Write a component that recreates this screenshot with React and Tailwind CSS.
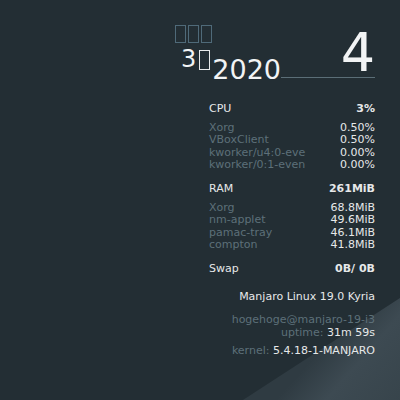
import React from "react";

const G = "text-[#5d7079]";
const W = "text-[#e6e8e9]";

function Row({ label, value, head, bold }) {
  return (
    <div className="flex justify-between">
      <span className={head ? W : G}>{label}</span>
      <span className={`${W} ${bold ? "font-bold" : ""}`}>{value}</span>
    </div>
  );
}

function Tofu({ ch, cls }) {
  return (
    <span className={`block overflow-hidden text-transparent text-[8px] leading-none border ${cls}`}>
      {ch}
    </span>
  );
}

export default function App() {
  return (
    <div className="relative w-[400px] h-[400px] overflow-hidden bg-[#232e34] font-['DejaVu_Sans',sans-serif]">
      <svg className="absolute inset-0" width="400" height="400" viewBox="0 0 400 400">
        <defs>
          <linearGradient id="g" x1="320" y1="350" x2="400" y2="420" gradientUnits="userSpaceOnUse">
            <stop offset="0" stopColor="#2f3b42" />
            <stop offset="0.35" stopColor="#3d4a52" />
            <stop offset="1" stopColor="#36434a" />
          </linearGradient>
        </defs>
        <polygon points="400,298 400,400 243,400" fill="url(#g)" />
      </svg>

      <div className="relative flex flex-col items-end pr-[25px] pt-[25px]">
        <div className="flex items-start w-[200px]">
          <div className="flex flex-col">
            <div className="flex gap-[2px]">
              <Tofu ch="水" cls="w-[11px] h-[18px] border-[#4f6a79]" />
              <Tofu ch="曜" cls="w-[11px] h-[18px] border-[#4f6a79]" />
              <Tofu ch="日" cls="w-[11px] h-[18px] border-[#4f6a79]" />
            </div>
            <div className="flex items-start mt-[3px] text-[#f2f4f5]">
              <span className="ml-[6px] mt-[1px] text-[24px] leading-none">3</span>
              <span className="ml-[3px] mt-[4px]">
                <Tofu ch="月" cls="w-[11px] h-[20px] border-[#e8eaeb]" />
              </span>
              <span className="ml-[2px] mt-[10px] text-[27px] leading-none">2020</span>
            </div>
          </div>
          <div className="flex-1 flex flex-col items-end mt-[3px]">
            <div className="h-[49px] leading-[49px] text-[54px] text-[#f2f4f5]">4</div>
            <div className="w-full h-px bg-[#5b6e77]" />
          </div>
        </div>

        <div className="w-[166px] mt-[20px] text-[11px] leading-[12.4px]">
          <Row label="CPU" value="3%" head bold />
          <div className="mt-[6.6px]">
            <Row label="Xorg" value="0.50%" />
            <Row label="VBoxClient" value="0.50%" />
            <Row label="kworker/u4:0-eve" value="0.00%" />
            <Row label="kworker/0:1-even" value="0.00%" />
          </div>
          <div className="mt-[11.3px]">
            <Row label="RAM" value="261MiB" head bold />
          </div>
          <div className="mt-[6.6px]">
            <Row label="Xorg" value="68.8MiB" />
            <Row label="nm-applet" value="49.6MiB" />
            <Row label="pamac-tray" value="46.1MiB" />
            <Row label="compton" value="41.8MiB" />
          </div>
          <div className="mt-[11.3px]">
            <Row label="Swap" value="0B/ 0B" head bold />
          </div>
          <div className="flex flex-col items-end mt-[15.5px]">
            <div className={W}>Manjaro Linux 19.0 Kyria</div>
            <div className={`mt-[11.3px] ${G}`}>hogehoge@manjaro-19-i3</div>
            <div>
              <span className={G}>uptime: </span>
              <span className={W}>31m 59s</span>
            </div>
            <div className="mt-[5.9px]">
              <span className={G}>kernel: </span>
              <span className={W}>5.4.18-1-MANJARO</span>
            </div>
          </div>
        </div>
      </div>
    </div>
  );
}
